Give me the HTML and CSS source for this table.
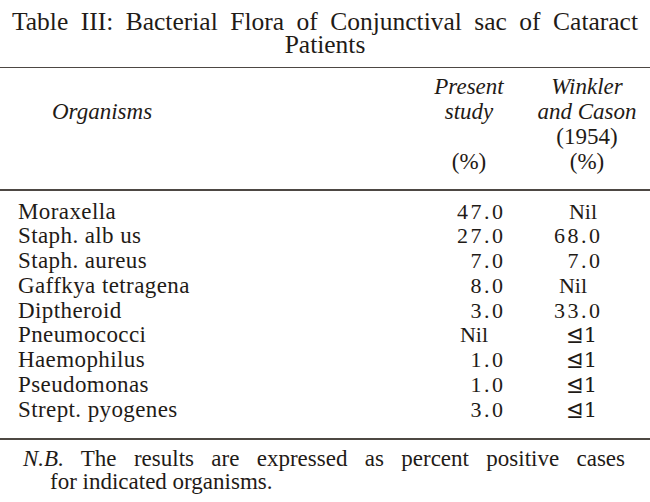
FILE: index.html
```html
<!DOCTYPE html>
<html>
<head>
<meta charset="utf-8">
<link rel="stylesheet" href="styles.css">
</head>
<body>
<div class="page">
  <div class="title">Table III: Bacterial Flora of Conjunctival sac of Cataract Patients</div>
  <div class="rule rule-top"></div>
  <div class="head">
    <div class="hcol hname"><div class="hl">&nbsp;</div><div class="hl it">Organisms</div></div>
    <div class="hcol hc1">
      <div class="hl it">Present</div>
      <div class="hl it">study</div>
      <div class="hl">&nbsp;</div>
      <div class="hl">(%)</div>
    </div>
    <div class="hcol hc2">
      <div class="hl it">Winkler</div>
      <div class="hl it">and Cason</div>
      <div class="hl">(1954)</div>
      <div class="hl">(%)</div>
    </div>
  </div>
  <div class="rule rule-mid"></div>
  <div class="body">
    <div class="row"><span class="name">Moraxella</span><span class="v1"><span class="num">47.0</span></span><span class="v2 nil2a">Nil</span></div>
    <div class="row"><span class="name">Staph. alb us</span><span class="v1"><span class="num">27.0</span></span><span class="v2"><span class="num">68.0</span></span></div>
    <div class="row"><span class="name">Staph. aureus</span><span class="v1"><span class="num">7.0</span></span><span class="v2"><span class="num">7.0</span></span></div>
    <div class="row"><span class="name">Gaffkya tetragena</span><span class="v1"><span class="num">8.0</span></span><span class="v2 nil2b">Nil</span></div>
    <div class="row"><span class="name">Diptheroid</span><span class="v1"><span class="num">3.0</span></span><span class="v2"><span class="num">33.0</span></span></div>
    <div class="row"><span class="name">Pneumococci</span><span class="v1 nil1">Nil</span><span class="v2 lt">⊴1</span></div>
    <div class="row"><span class="name">Haemophilus</span><span class="v1"><span class="num">1.0</span></span><span class="v2 lt">⊴1</span></div>
    <div class="row"><span class="name">Pseudomonas</span><span class="v1"><span class="num">1.0</span></span><span class="v2 lt">⊴1</span></div>
    <div class="row"><span class="name">Strept. pyogenes</span><span class="v1"><span class="num">3.0</span></span><span class="v2 lt">⊴1</span></div>
  </div>
  <div class="rule rule-bot"></div>
  <div class="note">
    <div class="note-line1"><span class="it">N.B.</span> The results are expressed as percent positive cases</div>
    <div class="note-line2">for indicated organisms.</div>
  </div>
</div>
</body>
</html>
```
FILE: styles.css
```css
html, body {
  margin: 0;
  padding: 0;
  background: #ffffff;
}
.page {
  width: 650px;
  height: 502px;
  overflow: hidden;
  font-family: "Liberation Serif", "DejaVu Serif", serif;
  color: #1f1b17;
}
.it { font-style: italic; }

.title {
  padding: 10px 12px 0 12px;
  font-size: 25.5px;
  line-height: 23px;
  text-align: justify;
  text-align-last: center;
}

.rule {
  height: 1.5px;
  background: #4d4843;
}
.rule-top { margin-top: 10.5px; }

.head {
  display: grid;
  grid-template-columns: 1fr 98px 118px;
  column-gap: 10px;
  padding: 6px 4px 15px 0;
  font-size: 23px;
  line-height: 25px;
}
.hname { padding-left: 52px; }
.hc1, .hc2 {
  text-align: center;
  white-space: nowrap;
}

.body {
  padding: 9px 50px 16px 18px;
  font-size: 23px;
  line-height: 24.75px;
}
.row {
  display: grid;
  grid-template-columns: 1fr 100px 97px;
}
.name { letter-spacing: 0.4px; white-space: nowrap; }
.v1, .v2 { text-align: right; white-space: nowrap; font-size: 22px; }
.num { letter-spacing: 2.5px; margin-right: -2.5px; }
.nil1 { padding-right: 15px; }
.nil2a { padding-right: 3px; }
.nil2b { padding-right: 13px; }
.lt { padding-right: 3px; font-family: "DejaVu Serif", "Liberation Serif", serif; font-size: 21px; }

.note {
  padding: 7px 25px 0 23px;
  font-size: 23px;
  line-height: 23px;
}
.note-line1 {
  text-align: justify;
  text-align-last: justify;
}
.note-line2 { padding-left: 27px; }
```
